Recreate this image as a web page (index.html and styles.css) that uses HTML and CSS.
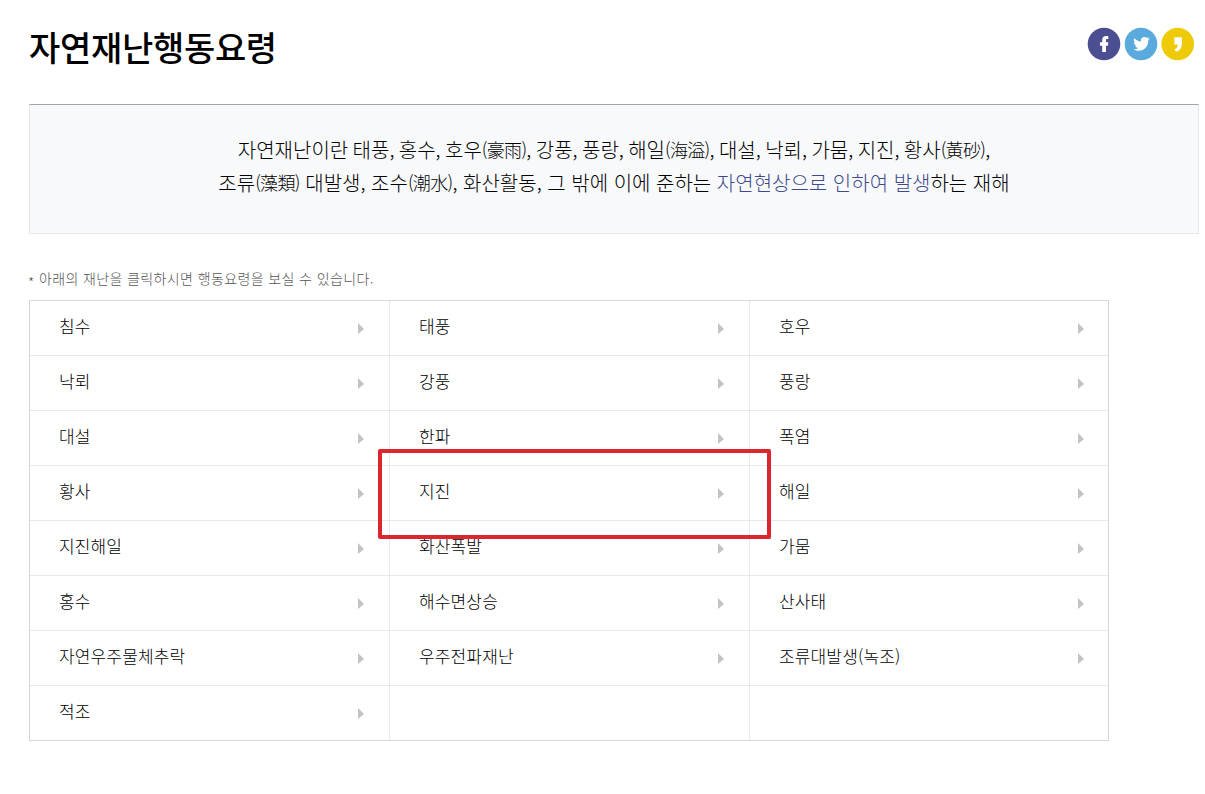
FILE: index.html
```
<!DOCTYPE html>
<html lang="ko">
<head>
    <meta charset="UTF-8">
    <meta name="viewport" content="width=device-width, initial-scale=1.0">
    <title>자연재난행동요령</title>
    <link rel="stylesheet" href="styles.css">
</head>
<body>

    <div class="header">
        <h1>자연재난행동요령</h1>
        <div class="sns">
            <a href="#" aria-label="facebook">
                <svg width="34" height="34" viewBox="0 0 34 34">
                    <circle cx="17" cy="17" r="16.3" fill="#4b4f92"/>
                    <path d="M15.200 25V18.700H13V15.300H15.200V13C15.200 10.200 16.700 8.900 19.100 8.900H21.300V12.100H20C19.200 12.100 19 12.500 19 13.200V15.300H21.300L21 18.700H19V25Z" fill="#fff"/>
                </svg>
            </a>
            <a href="#" aria-label="twitter">
                <svg width="34" height="34" viewBox="0 0 34 34">
                    <circle cx="17" cy="17" r="16.3" fill="#5aaade"/>
                    <path d="M10.300 11.200C12 13.200 14.300 14.300 17 14.400C16.500 11.800 18.300 10 20.500 10C21.500 10 22.400 10.400 23 11.100L25.200 10.300L24 12.200L25.700 11.800L24.200 13.500C24.400 19 20.500 23.800 14.800 23.800C12.900 23.800 11.200 23.300 9.700 22.300C11.500 22.400 13 21.900 14.300 20.900C12.700 20.800 11.500 19.900 11.100 18.500H12.500C10.900 18 9.900 16.700 9.900 15L11.300 15.400C9.900 14.300 9.500 12.600 10.300 11.200Z" fill="#fff"/>
                </svg>
            </a>
            <a href="#" aria-label="kakaostory">
                <svg width="34" height="34" viewBox="0 0 34 34">
                    <circle cx="16.700" cy="17" r="16.3" fill="#efca08"/>
                    <path d="M13.300 10.200H20.900V16.500C20.900 21 18.800 23.700 15 24.700L13.600 22.200C15.800 21.300 16.700 20 16.800 17.500H13.300Z" fill="#fff"/>
                </svg>
            </a>
        </div>
    </div>

    <div class="summary">
        <p class="names">자연재난이란 태풍, 홍수, 호우<span class="hanja">(豪雨)</span>, 강풍, 풍랑, 해일<span class="hanja">(海溢)</span>, 대설, 낙뢰, 가뭄, 지진, 황사<span class="hanja">(黃砂)</span>,</p>
        <p>조류<span class="hanja">(藻類)</span> 대발생, 조수<span class="hanja">(潮水)</span>, 화산활동, 그 밖에 이에 준하는 <span class="point">자연현상으로 인하여 발생</span>하는 재해</p>
    </div>

    <p class="guide"><span class="mark">*</span> 아래의 재난을 클릭하시면 행동요령을 보실 수 있습니다.</p>

    <ul class="disaster-list">
        <li><a href="#">침수</a></li>
        <li><a href="#">태풍</a></li>
        <li><a href="#">호우</a></li>
        <li><a href="#">낙뢰</a></li>
        <li><a href="#">강풍</a></li>
        <li><a href="#">풍랑</a></li>
        <li><a href="#">대설</a></li>
        <li><a href="#">한파</a></li>
        <li><a href="#">폭염</a></li>
        <li><a href="#">황사</a></li>
        <li class="selected"><a href="#">지진</a></li>
        <li><a href="#">해일</a></li>
        <li><a href="#">지진해일</a></li>
        <li><a href="#">화산폭발</a></li>
        <li><a href="#">가뭄</a></li>
        <li><a href="#">홍수</a></li>
        <li><a href="#">해수면상승</a></li>
        <li><a href="#">산사태</a></li>
        <li><a href="#">자연우주물체추락</a></li>
        <li><a href="#">우주전파재난</a></li>
        <li><a href="#">조류대발생(녹조)</a></li>
        <li><a href="#">적조</a></li>
        <li></li>
        <li></li>
    </ul>

</body>
</html>
```
FILE: styles.css
```
* {
    box-sizing: border-box;
}
body {
    margin: 0;
    padding: 0 6px 0 29px;
    background: #fff;
    color: #000;
    font-family: "Noto Sans CJK KR", sans-serif;
    font-weight: 300;
}
h1, p, ul {
    margin: 0;
    padding: 0;
}
a {
    color: inherit;
    text-decoration: none;
}

.header {
    display: flex;
    justify-content: space-between;
    height: 104px;
}
h1 {
    padding-top: 22px;
    font-size: 34px;
    font-weight: 500;
    line-height: 50px;
    letter-spacing: -0.3px;
}
.sns {
    display: flex;
    gap: 3px;
    padding: 27px 4px 0 0;
}
.sns svg {
    display: block;
}

.summary {
    height: 130px;
    padding-top: 28px;
    border: 1px solid #e5e7ea;
    border-top-color: #a5a5a5;
    background: #f8f9fb;
    font-size: 20px;
    line-height: 33px;
    text-align: center;
    white-space: nowrap;
}
.names {
    word-spacing: -1.2px;
}
.hanja {
    font-size: 18px;
    line-height: 1;
    letter-spacing: -0.7px;
    vertical-align: 1px;
}
.point {
    color: #3f4a8c;
}

.guide {
    padding-top: 34px;
    height: 66px;
    color: #555;
    font-size: 14px;
    line-height: 20px;
    letter-spacing: 0.38px;
}
.mark {
    margin-left: -1px;
    font-size: 14px;
    line-height: 1;
    vertical-align: -4px;
}

.disaster-list {
    display: grid;
    grid-template-columns: 360px 360px 358px;
    width: 1080px;
    border: 1px solid #d5d7d9;
    list-style: none;
}
.disaster-list li {
    position: relative;
    height: 55px;
    border-right: 1px solid #e7e9ea;
    border-bottom: 1px solid #e7e9ea;
}
.disaster-list li:nth-child(3n) {
    border-right: none;
}
.disaster-list li:nth-last-child(-n+3) {
    height: 54px;
    border-bottom: none;
}
.disaster-list a {
    display: flex;
    align-items: center;
    justify-content: space-between;
    height: 49px;
    padding: 0 25px 0 29px;
    font-size: 17px;
    letter-spacing: 0.15px;
}
/* arrow */
.disaster-list a::after {
    content: "";
    width: 0;
    margin-top: 6px;
    border-left: 6px solid #c3c3c3;
    border-top: 6px solid transparent;
    border-bottom: 5px solid transparent;
}
.disaster-list li:nth-child(3n) a {
    padding-right: 24px;
}

/* red box around the selected item */
.selected::before {
    content: "";
    box-sizing: border-box;
    position: absolute;
    z-index: 1;
    top: -17px;
    left: -12px;
    width: 393px;
    height: 90px;
    border: 4px solid #dc252c;
    border-radius: 2px;
    pointer-events: none;
}
```
